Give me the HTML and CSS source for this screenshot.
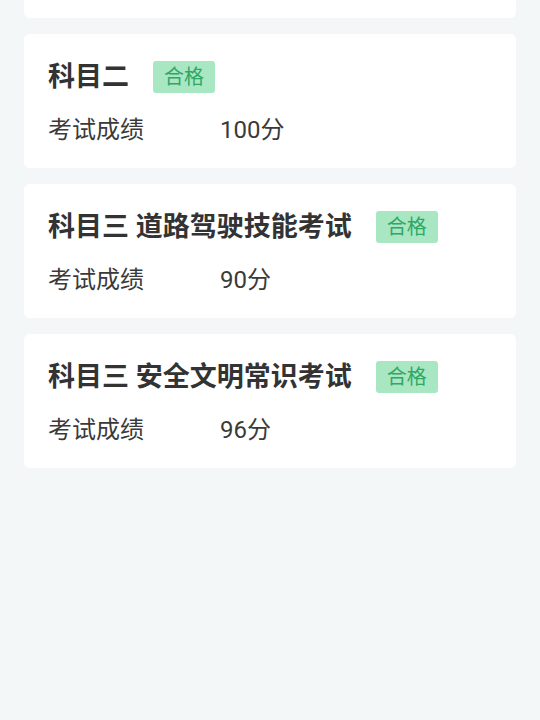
FILE: index.html
```html
<!DOCTYPE html>
<html>
<head>
  <meta charset="utf-8">
  <title>考试成绩</title>
  <link rel="stylesheet" href="styles.css">
</head>
<body>
  <div class="list">
    <div class="card-tail"></div>
    <div class="card">
      <div class="title-row">
        <span class="title">科目二</span>
        <span class="badge">合格</span>
      </div>
      <div class="score-row">
        <span class="label">考试成绩</span>
        <span class="value">100分</span>
      </div>
    </div>
    <div class="card">
      <div class="title-row">
        <span class="title">科目三 道路驾驶技能考试</span>
        <span class="badge">合格</span>
      </div>
      <div class="score-row">
        <span class="label">考试成绩</span>
        <span class="value">90分</span>
      </div>
    </div>
    <div class="card">
      <div class="title-row">
        <span class="title">科目三 安全文明常识考试</span>
        <span class="badge">合格</span>
      </div>
      <div class="score-row">
        <span class="label">考试成绩</span>
        <span class="value">96分</span>
      </div>
    </div>
  </div>
</body>
</html>
```
FILE: styles.css
```css
* {
  margin: 0;
  padding: 0;
  box-sizing: border-box;
}

body {
  font-family: Roboto, "Noto Sans CJK SC", sans-serif;
  background-color: #f4f7f8;
  height: 720px;
  overflow: hidden;
}

.list {
  display: flex;
  flex-direction: column;
  gap: 16px;
  margin: 0 24px;
}

/* bottom of the card scrolled above the top edge */
.card-tail {
  height: 18px;
  background-color: #fff;
  border-radius: 0 0 6px 6px;
}

.card {
  height: 134px;
  background-color: #fff;
  border-radius: 6px;
  padding: 25px 24px 22px;
}

.title-row {
  display: flex;
  align-items: center;
  height: 36px;
}

.title {
  font-size: 27px;
  font-weight: bold;
  color: #333;
  line-height: 36px;
}

.badge {
  margin-left: 24px;
  height: 32px;
  padding: 0 11px;
  border-radius: 3px;
  background-color: #a9e7c3;
  color: #2fa866;
  font-size: 20px;
  line-height: 32px;
}

.score-row {
  display: flex;
  margin-top: 19px;
  font-size: 24px;
  line-height: 32px;
  color: #3a3a3a;
}

.label {
  width: 172px;
}
```
